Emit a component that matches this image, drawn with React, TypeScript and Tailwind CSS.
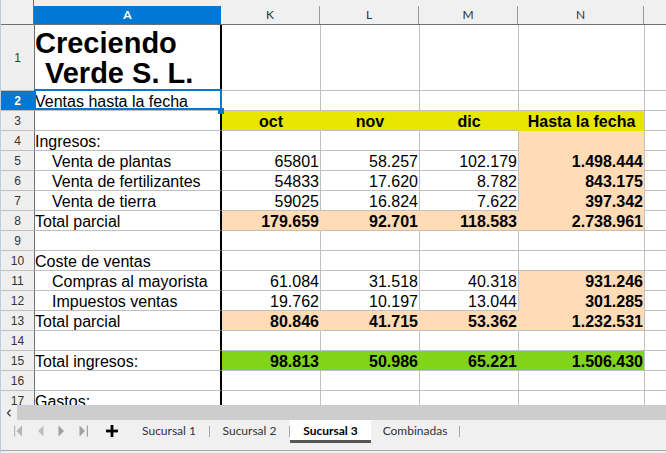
import clsx from 'clsx';

type Fill = 'y' | 'p' | 'g';
type C = { t?: string; b?: boolean; f?: Fill; fb?: boolean; c?: boolean };
type R = { n: number; a?: string; ind?: boolean; cells?: C[] };

const FILL: Record<Fill, { bg: string; r: string; b: string }> = {
  y: { bg: 'bg-[#e6e600]', r: 'border-r-[#e6e600]', b: 'border-b-[#e6e600]' },
  p: { bg: 'bg-[#ffdbb6]', r: 'border-r-[#ffdbb6]', b: 'border-b-[#ffdbb6]' },
  g: { bg: 'bg-[#81d41a]', r: 'border-r-[#81d41a]', b: 'border-b-[#81d41a]' },
};

const COLS = [
  { id: 'K', w: 'w-[99px]' },
  { id: 'L', w: 'w-[99px]' },
  { id: 'M', w: 'w-[99px]' },
  { id: 'N', w: 'w-[126px]' },
];

const pN = (t: string, fb = true): C => ({ t, b: true, f: 'p', fb });

const ROWS: R[] = [
  { n: 2, a: 'Ventas hasta la fecha' },
  {
    n: 3,
    cells: [
      { t: 'oct', b: true, f: 'y', c: true },
      { t: 'nov', b: true, f: 'y', c: true },
      { t: 'dic', b: true, f: 'y', c: true },
      { t: 'Hasta la fecha', b: true, f: 'y', fb: true, c: true },
    ],
  },
  { n: 4, a: 'Ingresos:', cells: [{}, {}, {}, { f: 'p', fb: true }] },
  { n: 5, a: 'Venta de plantas', ind: true, cells: [{ t: '65801' }, { t: '58.257' }, { t: '102.179' }, pN('1.498.444')] },
  { n: 6, a: 'Venta de fertilizantes', ind: true, cells: [{ t: '54833' }, { t: '17.620' }, { t: '8.782' }, pN('843.175')] },
  { n: 7, a: 'Venta de tierra', ind: true, cells: [{ t: '59025' }, { t: '16.824' }, { t: '7.622' }, pN('397.342')] },
  { n: 8, a: 'Total parcial', cells: [pN('179.659', false), pN('92.701', false), pN('118.583', false), pN('2.738.961', false)] },
  { n: 9 },
  { n: 10, a: 'Coste de ventas' },
  { n: 11, a: 'Compras al mayorista', ind: true, cells: [{ t: '61.084' }, { t: '31.518' }, { t: '40.318' }, pN('931.246')] },
  { n: 12, a: 'Impuestos ventas', ind: true, cells: [{ t: '19.762' }, { t: '10.197' }, { t: '13.044' }, pN('301.285')] },
  { n: 13, a: 'Total parcial', cells: [pN('80.846', false), pN('41.715', false), pN('53.362', false), pN('1.232.531', false)] },
  { n: 14 },
  {
    n: 15,
    a: 'Total ingresos:',
    cells: [
      { t: '98.813', b: true, f: 'g' },
      { t: '50.986', b: true, f: 'g' },
      { t: '65.221', b: true, f: 'g' },
      { t: '1.506.430', b: true, f: 'g' },
    ],
  },
  { n: 16 },
  { n: 17, a: 'Gastos:' },
];

function RowHead({ n, sel, tall }: { n: number; sel?: boolean; tall?: boolean }) {
  return (
    <div
      className={clsx(
        'w-[34px] shrink-0 flex items-center justify-center border-r border-b border-r-[#6f6f6f] border-b-[#c0c0c0] text-[12px]',
        tall ? 'h-[66px]' : 'h-[20px]',
        sel ? 'bg-[#0078d4] text-white font-bold' : 'bg-[#efefef] text-[#333]',
      )}
    >
      {n}
    </div>
  );
}

function DataCell({ w, c, isN }: { w: string; c: C; isN: boolean }) {
  const f = c.f ? FILL[c.f] : null;
  return (
    <div
      className={clsx(
        'shrink-0 h-full flex items-end whitespace-nowrap overflow-hidden border-r border-b border-[#c0c0c0] leading-[16px] px-[1px]',
        w,
        c.c ? 'justify-center' : 'justify-end',
        c.b && 'font-bold',
        f && f.bg,
        f && !isN && f.r,
        f && c.fb && f.b,
      )}
    >
      {c.t}
    </div>
  );
}

function Tri({ dir, bar, color }: { dir: 'l' | 'r'; bar?: boolean; color: string }) {
  const w = bar ? 9 : 7;
  return (
    <svg width={w} height="12" viewBox={`0 0 ${w} 12`} className="shrink-0">
      {dir === 'l' ? (
        <>
          {bar && <rect x="0" y="0.5" width="1.2" height="11" fill={color} />}
          <path d={bar ? 'M8 0.5 L2.5 6 L8 11.5 Z' : 'M6.5 0.5 L1 6 L6.5 11.5 Z'} fill={color} />
        </>
      ) : (
        <>
          <path d="M0.5 0.5 L6 6 L0.5 11.5 Z" fill={color} />
          {bar && <rect x="7.8" y="0.5" width="1.2" height="11" fill={color} />}
        </>
      )}
    </svg>
  );
}

function Sep() {
  return <div className="w-px h-[11px] bg-[#a8a8a8] shrink-0" />;
}

export default function App() {
  return (
    <div className="w-[666px] h-[453px] overflow-hidden bg-[#f0f0f0] flex flex-col border-l border-l-[#b9cde3] font-['Lato',sans-serif]">
      <div className="h-[405px] shrink-0 overflow-hidden bg-white text-black font-['Liberation_Sans',Arial,sans-serif] text-[16px]">
        {/* cabecera de columnas */}
        <div className="flex h-[25px] bg-[#f0f0f0] font-['Lato',sans-serif] text-[12px] text-[#333]">
          <div className="w-[33px] shrink-0 border-r border-b border-[#6f6f6f]" />
          <div className="w-[187px] shrink-0 flex flex-col border-b border-[#6f6f6f]">
            <div className="h-[7px]" />
            <div className="flex-1 bg-[#0078d4] text-white font-bold flex items-center justify-center">A</div>
          </div>
          {COLS.map((c) => (
            <div key={c.id} className={clsx(c.w, 'shrink-0 flex flex-col border-b border-[#6f6f6f]')}>
              <div className="h-[6px]" />
              <div className="flex-1 flex items-center justify-center border-r border-[#9a9a9a]">{c.id}</div>
            </div>
          ))}
          <div className="flex-1 border-b border-[#6f6f6f]" />
        </div>

        {/* fila 1 */}
        <div className="flex h-[66px]">
          <RowHead n={1} tall />
          <div className="w-[187px] shrink-0 flex flex-col justify-end border-r-2 border-b border-r-black border-b-[#c0c0c0] font-bold text-[29px] leading-[30px] pb-[2px] whitespace-nowrap">
            <div>Creciendo</div>
            <div className="pl-[10px]">Verde S. L.</div>
          </div>
          {COLS.map((c) => (
            <DataCell key={c.id} w={c.w} c={{}} isN={c.id === 'N'} />
          ))}
          <div className="flex-1 border-b border-[#c0c0c0]" />
        </div>

        {ROWS.map((r) => {
          const cells = r.cells ?? [{}, {}, {}, {}];
          const sel = r.n === 2;
          return (
            <div key={r.n} className="flex h-[20px]">
              <RowHead n={r.n} sel={sel} />
              <div
                className={clsx(
                  'relative w-[187px] shrink-0 flex items-end border-r-2 border-b border-r-black border-b-[#c0c0c0] leading-[16px] whitespace-nowrap',
                  r.ind ? 'pl-[17px]' : 'pl-0',
                )}
              >
                {r.a}
                {sel && (
                  <>
                    <div className="absolute left-[-1px] top-[-2px] w-[188px] h-[21px] border-2 border-[#0078d4] z-10 pointer-events-none" />
                    <div className="absolute left-[183px] top-[17px] w-[6px] h-[6px] bg-[#0078d4] z-10" />
                  </>
                )}
              </div>
              {COLS.map((c, i) => (
                <DataCell key={c.id} w={c.w} c={cells[i]} isN={c.id === 'N'} />
              ))}
              <div className="flex-1 border-b border-[#c0c0c0]" />
            </div>
          );
        })}
      </div>

      {/* barra de desplazamiento */}
      <div className="h-[15px] shrink-0 flex">
        <div className="w-[16px] shrink-0 bg-[#f0f0f0] flex items-center justify-center">
          <svg width="6" height="8" viewBox="0 0 6 8">
            <path d="M4.5 0.8 L1.5 4 L4.5 7.2" fill="none" stroke="#444" strokeWidth="1.3" />
          </svg>
        </div>
        <div className="flex-1 bg-[#cdcdcd]" />
      </div>

      {/* pestañas */}
      <div className="h-[31px] shrink-0 flex items-start border-b border-[#a8a8a8] text-[12px] text-[#333]">
        <div className="h-[22px] flex items-center">
          <div className="ml-[13px]">
            <Tri dir="l" bar color="#b5b5b5" />
          </div>
          <div className="ml-[14px]">
            <Tri dir="l" color="#bdbdbd" />
          </div>
          <div className="ml-[14px]">
            <Tri dir="r" color="#a0a0a0" />
          </div>
          <div className="ml-[14px]">
            <Tri dir="r" bar color="#a0a0a0" />
          </div>
          <svg width="14" height="14" viewBox="0 0 14 14" className="ml-[17px] shrink-0">
            <rect x="5.6" y="1" width="2.8" height="12" fill="#000" />
            <rect x="1" y="5.6" width="12" height="2.8" fill="#000" />
          </svg>
          <div className="w-[80px] ml-[10px] flex justify-center">Sucursal 1</div>
          <Sep />
          <div className="w-[79px] flex justify-center">Sucursal 2</div>
          <Sep />
        </div>
        <div className="w-[81px] h-[23px] bg-white border-b-[3px] border-[#555] flex items-center justify-center font-bold text-black pt-[1px]">
          Sucursal 3
        </div>
        <div className="h-[22px] flex items-center">
          <div className="w-[88px] flex justify-center">Combinadas</div>
          <Sep />
        </div>
      </div>
    </div>
  );
}
